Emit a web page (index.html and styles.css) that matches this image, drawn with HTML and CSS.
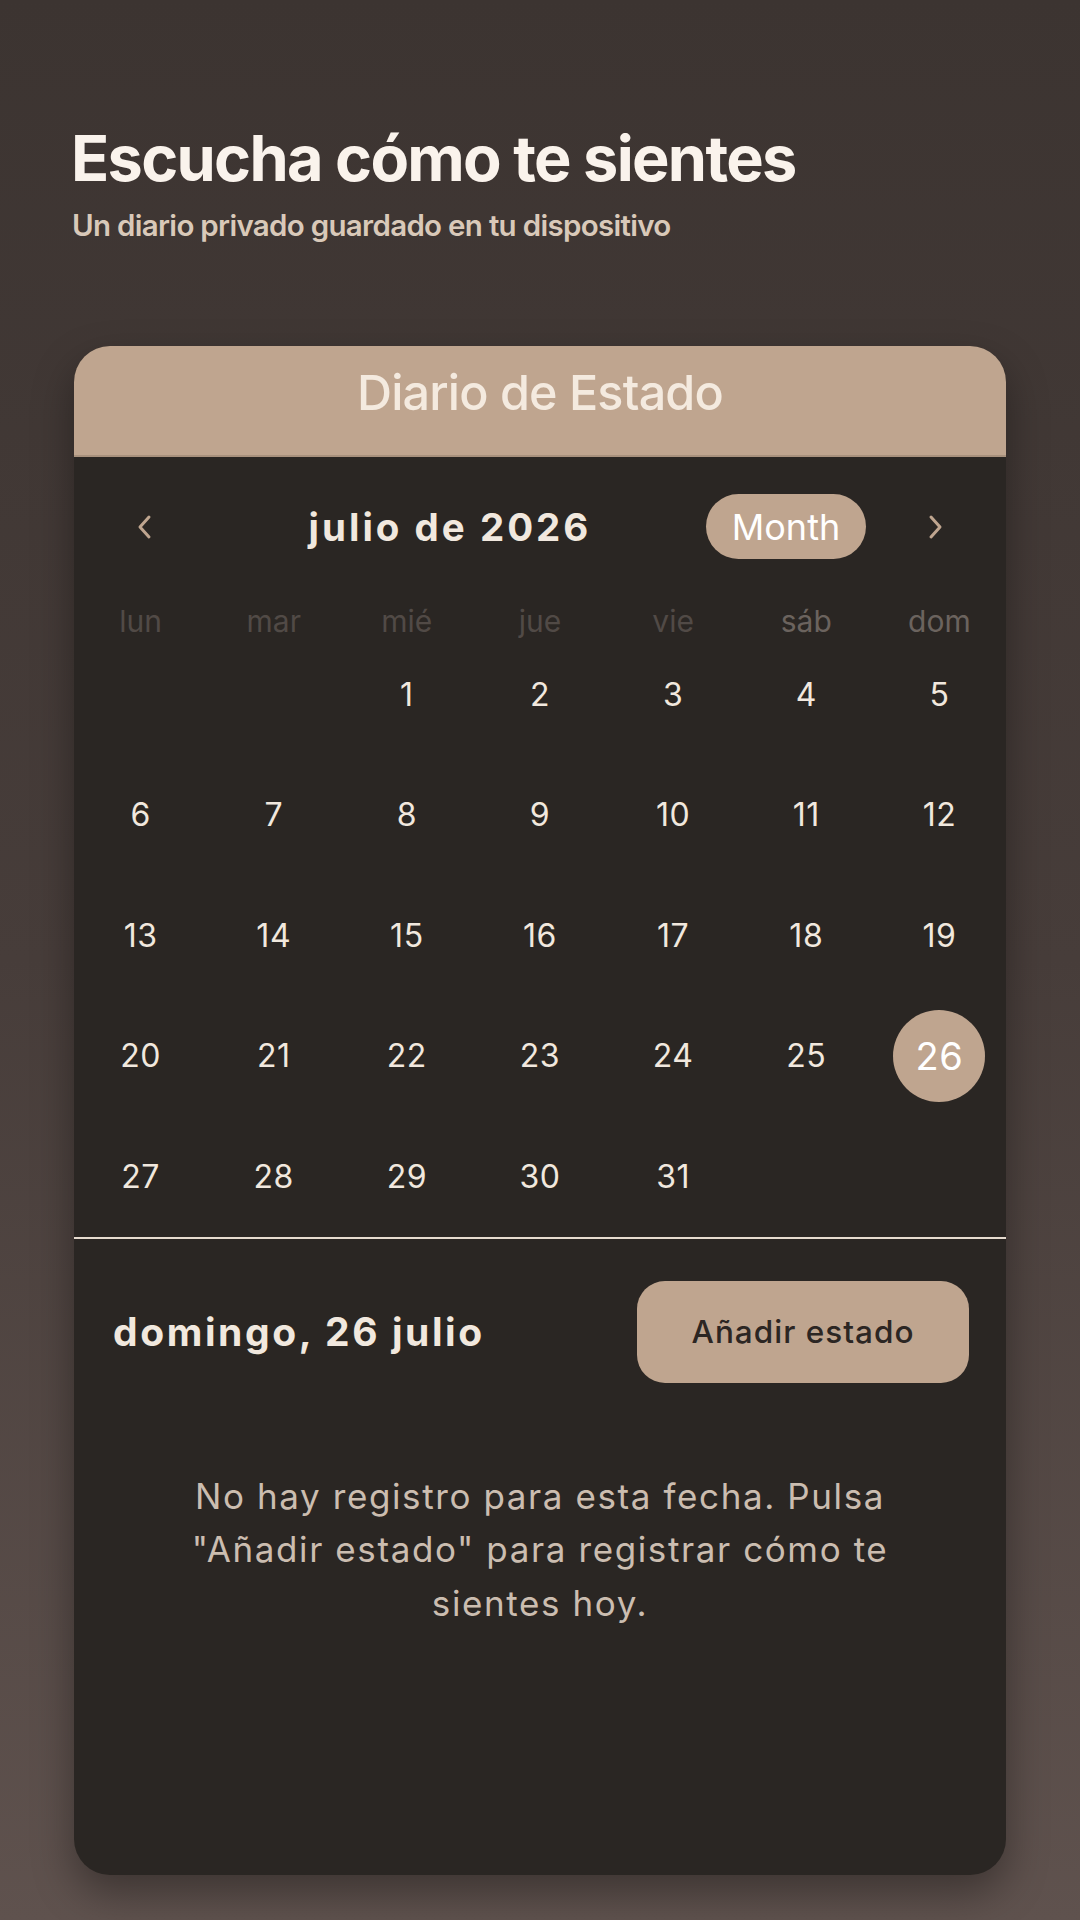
FILE: index.html
```html
<!DOCTYPE html>
<html lang="es">
<head>
<meta charset="utf-8">
<title>Diario de Estado</title>
<link rel="stylesheet" href="styles.css">
</head>
<body>
<main class="page">
  <header class="hero">
    <h1 class="hero-title">Escucha cómo te sientes</h1>
    <p class="hero-sub">Un diario privado guardado en tu dispositivo</p>
  </header>

  <section class="card">
    <div class="card-head">Diario de Estado</div>

    <div class="nav">
      <button class="chev" aria-label="Anterior">
        <svg width="18" height="26" viewBox="0 0 18 26"><path d="M14 3 L5 13 L14 23" fill="none" stroke="#bfa58f" stroke-width="3" stroke-linecap="round" stroke-linejoin="round"/></svg>
      </button>
      <div class="nav-title">julio de 2026</div>
      <div class="pill">Month</div>
      <button class="chev chev-right" aria-label="Siguiente">
        <svg width="18" height="26" viewBox="0 0 18 26"><path d="M4 3 L13 13 L4 23" fill="none" stroke="#bfa58f" stroke-width="3" stroke-linecap="round" stroke-linejoin="round"/></svg>
      </button>
    </div>

    <div class="weekdays">
      <span>lun</span><span>mar</span><span>mié</span><span>jue</span><span>vie</span><span class="wkend">sáb</span><span class="wkend">dom</span>
    </div>

    <div class="days">
      <span></span><span></span><span>1</span><span>2</span><span>3</span><span>4</span><span>5</span>
      <span>6</span><span>7</span><span>8</span><span>9</span><span>10</span><span>11</span><span>12</span>
      <span>13</span><span>14</span><span>15</span><span>16</span><span>17</span><span>18</span><span>19</span>
      <span>20</span><span>21</span><span>22</span><span>23</span><span>24</span><span>25</span><span class="sel"><b>26</b></span>
      <span>27</span><span>28</span><span>29</span><span>30</span><span>31</span><span></span><span></span>
    </div>

    <div class="divider"></div>

    <div class="day-row">
      <div class="day-title">domingo, 26 julio</div>
      <button class="add-btn">Añadir estado</button>
    </div>

    <p class="empty">No hay registro para esta fecha. Pulsa "Añadir estado" para registrar cómo te sientes hoy.</p>
  </section>
</main>
</body>
</html>
```

FILE: styles.css
```css
* { box-sizing: border-box; }

html, body {
  margin: 0;
  padding: 0;
}

body {
  width: 1080px;
  height: 1920px;
  background: linear-gradient(180deg, #3c3431 0%, #473d3a 50%, #5f524e 100%);
  font-family: Inter, "Noto Sans", "Liberation Sans", sans-serif;
  overflow: hidden;
}

.page {
  display: flex;
  flex-direction: column;
  padding: 120px 74px 0 74px;
}

.hero-title {
  margin: 0 0 0 -3px;
  font-size: 63px;
  line-height: 76px;
  font-weight: 700;
  letter-spacing: -1.7px;
  color: #faf3ec;
}

.hero-sub {
  margin: 10px 0 0 -2px;
  font-size: 29.5px;
  line-height: 38px;
  font-weight: 600;
  letter-spacing: -0.7px;
  color: #d9c9b9;
}

.card {
  margin-top: 102px;
  height: 1529px;
  background: #2a2623;
  border-radius: 36px;
  overflow: hidden;
  box-shadow: 0 18px 40px rgba(0, 0, 0, 0.35);
  display: flex;
  flex-direction: column;
}

.card-head {
  height: 111px;
  background: #bfa58f;
  border-bottom: 2px solid #a8917d;
  color: #f4eadf;
  font-size: 48.5px;
  font-weight: 500;
  letter-spacing: -0.8px;
  display: flex;
  align-items: center;
  justify-content: center;
  padding-bottom: 16px;
}

.nav {
  margin-top: 37px;
  height: 65px;
  display: flex;
  align-items: center;
  padding-left: 40px;
}

.chev {
  width: 60px;
  height: 60px;
  border: 0;
  background: transparent;
  padding: 0;
  display: flex;
  align-items: center;
  justify-content: center;
}

.chev-right {
  width: 140px;
}

.nav-title {
  flex: 1;
  text-align: center;
  padding-left: 20px;
  font-size: 38.5px;
  font-weight: 700;
  letter-spacing: 3px;
  color: #f1e8de;
}

.pill {
  width: 160px;
  height: 65px;
  border-radius: 33px;
  background: #bfa58f;
  color: #ffffff;
  font-size: 36px;
  font-weight: 400;
  display: flex;
  align-items: center;
  justify-content: center;
}

.weekdays {
  height: 75px;
  padding-top: 42px;
  display: grid;
  grid-template-columns: repeat(7, 1fr);
}

.weekdays span {
  text-align: center;
  line-height: 40px;
  font-size: 30px;
  color: #514a46;
}

.weekdays .wkend {
  color: #6b635e;
}

.days {
  display: grid;
  grid-template-columns: repeat(7, 1fr);
  grid-auto-rows: 120.5px;
}

.days span {
  display: flex;
  align-items: center;
  justify-content: center;
  font-size: 32px;
  letter-spacing: 0.5px;
  color: #f1e8de;
}

.days .sel b {
  width: 92px;
  height: 92px;
  border-radius: 50%;
  background: #bfa58f;
  color: #ffffff;
  font-weight: 400;
  font-size: 38px;
  display: flex;
  align-items: center;
  justify-content: center;
}

.divider {
  height: 2px;
  background: #e6dbcf;
}

.day-row {
  margin-top: 42px;
  height: 102px;
  display: flex;
  align-items: center;
  justify-content: space-between;
  padding: 0 37px 0 39px;
}

.day-title {
  font-size: 39px;
  font-weight: 700;
  letter-spacing: 2.6px;
  color: #f1e8de;
}

.add-btn {
  width: 332px;
  height: 102px;
  border: 0;
  border-radius: 28px;
  background: #bfa58f;
  color: #2c2623;
  font-family: Inter, "Noto Sans", "Liberation Sans", sans-serif;
  font-size: 31.5px;
  font-weight: 500;
  letter-spacing: 1px;
}

.empty {
  margin: 87px auto 0 auto;
  width: 780px;
  text-align: center;
  font-size: 35px;
  line-height: 53.5px;
  letter-spacing: 1.6px;
  color: #cbbdb0;
}
```
